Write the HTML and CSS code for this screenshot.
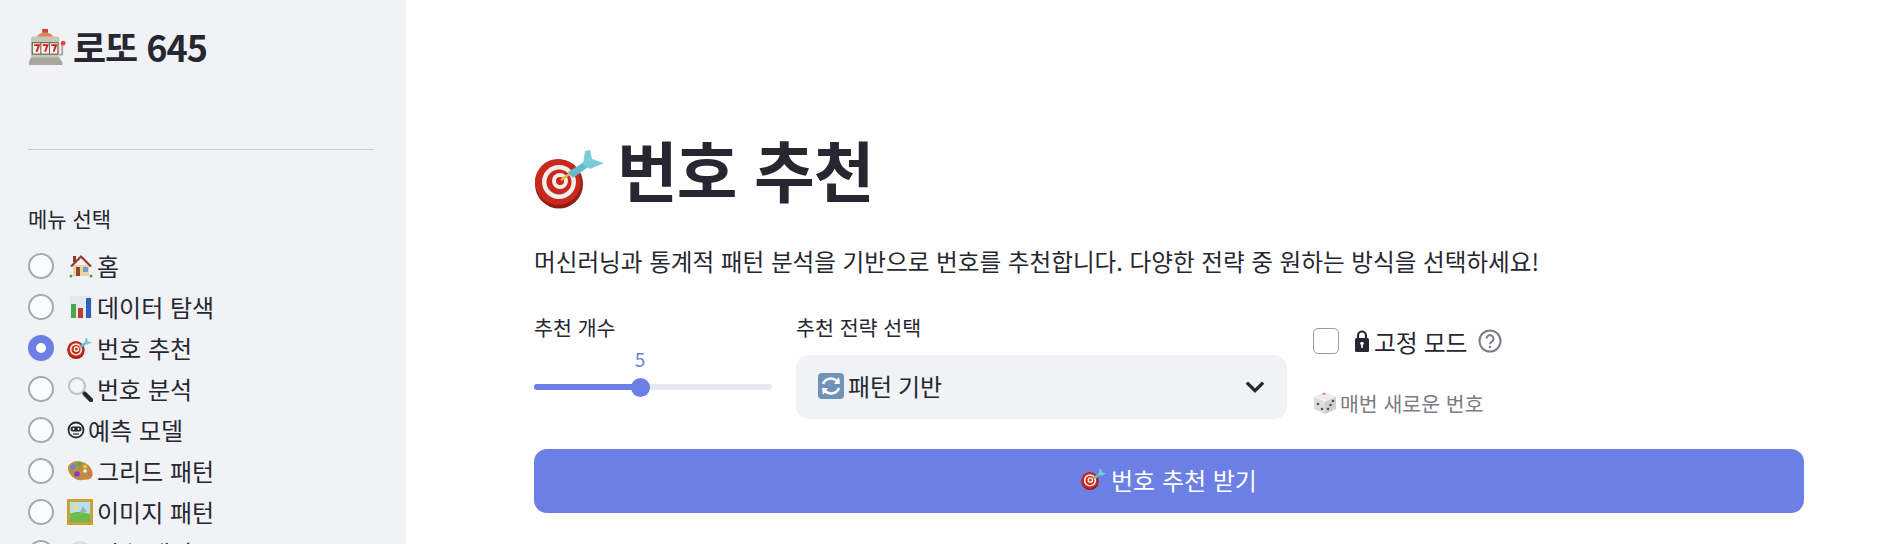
FILE: index.html
```html
<!DOCTYPE html>
<html lang="ko">
<head>
  <meta charset="UTF-8">
  <meta name="viewport" content="width=device-width, initial-scale=1.0">
  <title>번호 추천</title>
  <link rel="stylesheet" href="styles.css">
</head>
<body>
  <svg class="defs" width="0" height="0">
    <defs>
      <symbol id="i-dart" viewBox="0 0 72 72">
        <ellipse cx="25" cy="42" rx="24" ry="24.500" fill="#8f1d14"/>
        <circle cx="24" cy="40" r="23" fill="#c8281e"/>
        <circle cx="25" cy="40" r="17" fill="#f4eeea"/>
        <circle cx="25" cy="40" r="12.500" fill="#c8281e"/>
        <circle cx="26" cy="39" r="8" fill="#f4eeea"/>
        <circle cx="26" cy="39" r="4" fill="#c8281e"/>
        <path d="M27 38 37 31" stroke="#e3b83a" stroke-width="2.500"/>
        <path d="M34 30 50 20 54 25 39 36Z" fill="#63bccb"/>
        <path d="M49 22 51 9 56 8 58 17 70 21 56 27Z" fill="#7ccbd8"/>
      </symbol>
      <symbol id="i-slot" viewBox="0 0 40 40">
        <path d="M9 10C11 3 25 3 27 10Z" fill="#d98a55"/>
        <rect x="15" y="1" width="6" height="4" fill="#c8453a"/>
        <rect x="3" y="9" width="30" height="23" rx="3" fill="#c9c5b8"/>
        <rect x="4" y="15" width="28" height="13" fill="#55524a"/>
        <rect x="5" y="16" width="8" height="11" fill="#f2efe6"/>
        <rect x="14" y="16" width="8" height="11" fill="#f2efe6"/>
        <rect x="23" y="16" width="8" height="11" fill="#f2efe6"/>
        <path d="M6.500 18h5l-2.500 7M15.500 18h5l-2.500 7M24.500 18h5l-2.500 7" stroke="#d4201a" stroke-width="2" fill="none"/>
        <path d="M1 36 3 31H33L36 36V39H1Z" fill="#a9a69b"/>
        <path d="M33 28h3V17" stroke="#a9a69b" stroke-width="2" fill="none"/>
        <circle cx="37" cy="16" r="2.500" fill="#e0483e"/>
      </symbol>
      <symbol id="i-house" viewBox="0 0 24 24">
        <path d="M4 11H20V22H4Z" fill="#ecd3a6"/>
        <path d="M12 1 1 12 3 13 12 4 21 13 23 12Z" fill="#8e3a32"/>
        <rect x="4" y="2" width="3" height="6" fill="#8e3a32"/>
        <rect x="7" y="13" width="4" height="9" fill="#8a4a2d"/>
        <rect x="14" y="13" width="5" height="5" fill="#6ea3c7"/>
        <circle cx="2" cy="22" r="1.500" fill="#5a9a3a"/>
        <circle cx="22" cy="22" r="1.500" fill="#5a9a3a"/>
      </symbol>
      <symbol id="i-chart" viewBox="0 0 24 24">
        <rect x="1" y="1" width="22" height="22" fill="#e4e8ee"/>
        <rect x="2" y="9" width="5" height="14" fill="#4aa84a"/>
        <rect x="9" y="13" width="5" height="10" fill="#c0392b"/>
        <rect x="17" y="3" width="5" height="20" fill="#2c62b8"/>
      </symbol>
      <symbol id="i-glass" viewBox="0 0 26 26">
        <circle cx="10" cy="10" r="8" fill="#f2f6fa" stroke="#b7c0c8" stroke-width="2"/>
        <path d="M16 16 18 18" stroke="#777" stroke-width="3"/>
        <path d="M18 18 24 24" stroke="#26262c" stroke-width="4.500" stroke-linecap="round"/>
      </symbol>
      <symbol id="i-robot" viewBox="0 0 18 18">
        <circle cx="9" cy="9" r="7.500" fill="none" stroke="#26272f" stroke-width="1.800"/>
        <rect x="3.500" y="5.500" width="11" height="5" rx="2.500" fill="#26272f"/>
        <circle cx="6.500" cy="8" r="1" fill="#f0f2f6"/>
        <circle cx="11.500" cy="8" r="1" fill="#f0f2f6"/>
        <path d="M6 13h6" stroke="#26272f" stroke-width="1.200"/>
      </symbol>
      <symbol id="i-palette" viewBox="0 0 26 22">
        <path d="M1 7C3 1 12 0 18 3 24 6 27 12 25 17 23 21 19 19 15 20 10 22 0 15 1 7Z" fill="#c08c45"/>
        <circle cx="6" cy="7" r="2.500" fill="#4a8fd8"/>
        <circle cx="12" cy="4" r="2.300" fill="#4cae4c"/>
        <circle cx="18" cy="6.500" r="2" fill="#e8c53a"/>
        <circle cx="23" cy="14" r="2" fill="#e8663a"/>
        <circle cx="10" cy="14" r="2.800" fill="#7a42c8"/>
        <circle cx="18" cy="11" r="1.800" fill="#f0f2f6"/>
      </symbol>
      <symbol id="i-frame" viewBox="0 0 26 26">
        <rect width="26" height="26" fill="#c9a13b"/>
        <rect x="3" y="3" width="20" height="20" fill="#b5e0ee"/>
        <path d="M3 15C9 12 16 13 23 15V23H3Z" fill="#6dbb4a"/>
        <circle cx="8" cy="8" r="2.500" fill="#f4dd77"/>
        <path d="M13 13 16 7 20 13Z" fill="#9cb7b8"/>
      </symbol>
      <symbol id="i-orb" viewBox="0 0 26 26">
        <circle cx="13" cy="13" r="12" fill="#dddde0"/>
      </symbol>
      <symbol id="i-refresh" viewBox="0 0 26 26">
        <rect width="26" height="26" rx="4" fill="#6f93b8"/>
        <path d="M5 11A8.500 8.500 0 0 1 19 8" fill="none" stroke="#fff" stroke-width="2.600"/>
        <path d="M16 11 22 11 21 4Z" fill="#fff"/>
        <path d="M21 15A8.500 8.500 0 0 1 7 18" fill="none" stroke="#fff" stroke-width="2.600"/>
        <path d="M10 15 4 15 5 22Z" fill="#fff"/>
      </symbol>
      <symbol id="i-lock" viewBox="0 0 14 24">
        <path d="M3 10V6.500a4 4 0 0 1 8 0V10" fill="none" stroke="#26272f" stroke-width="2.200"/>
        <rect y="9" width="14" height="14" rx="1.500" fill="#26272f"/>
        <circle cx="7" cy="14.500" r="1.800" fill="#fff"/>
        <rect x="6.200" y="15" width="1.600" height="4" fill="#fff"/>
      </symbol>
      <symbol id="i-dice" viewBox="0 0 24 24">
        <path d="M12 1 23 6V18L12 23 1 18V6Z" fill="#dcdcdc"/>
        <path d="M12 1 23 6 12 11 1 6Z" fill="#f0efef"/>
        <path d="M12 11 23 6V18L12 23Z" fill="#cfcfcf"/>
        <ellipse cx="11" cy="3" rx="2" ry="1" fill="#e88"/>
        <circle cx="5" cy="13" r="1.300" fill="#555"/>
        <circle cx="9" cy="18" r="1.300" fill="#555"/>
        <circle cx="15" cy="18" r="1.300" fill="#555"/>
        <circle cx="17.500" cy="14" r="1.300" fill="#555"/>
        <circle cx="20" cy="10" r="1.300" fill="#555"/>
      </symbol>
    </defs>
  </svg>

  <div class="app">
    <aside class="sidebar">
      <div class="brand">
        <svg class="brand-icon"><use href="#i-slot"/></svg>
        <span>로또 645</span>
      </div>
      <hr class="side-rule">
      <p class="menu-title">메뉴 선택</p>
      <ul class="menu">
        <li class="menu-item"><span class="radio"></span><svg class="mi mi-wide"><use href="#i-house"/></svg>홈</li>
        <li class="menu-item"><span class="radio"></span><svg class="mi mi-wide"><use href="#i-chart"/></svg>데이터 탐색</li>
        <li class="menu-item"><span class="radio on"></span><svg class="mi"><use href="#i-dart"/></svg>번호 추천</li>
        <li class="menu-item"><span class="radio"></span><svg class="mi"><use href="#i-glass"/></svg>번호 분석</li>
        <li class="menu-item"><span class="radio"></span><svg class="mi mi-small"><use href="#i-robot"/></svg>예측 모델</li>
        <li class="menu-item"><span class="radio"></span><svg class="mi"><use href="#i-palette"/></svg>그리드 패턴</li>
        <li class="menu-item"><span class="radio"></span><svg class="mi"><use href="#i-frame"/></svg>이미지 패턴</li>
        <li class="menu-item"><span class="radio"></span><svg class="mi"><use href="#i-orb"/></svg>번호 패턴</li>
      </ul>
    </aside>

    <main class="content">
      <h1 class="page-title">
        <svg class="title-icon"><use href="#i-dart"/></svg>
        <span>번호 추천</span>
      </h1>
      <p class="intro">머신러닝과 통계적 패턴 분석을 기반으로 번호를 추천합니다. 다양한 전략 중 원하는 방식을 선택하세요!</p>

      <div class="controls">
        <div class="ctl-count">
          <label class="ctl-label">추천 개수</label>
          <div class="slider">
            <span class="slider-value">5</span>
            <div class="track"><div class="track-fill"></div><span class="thumb"></span></div>
          </div>
        </div>
        <div class="ctl-strategy">
          <label class="ctl-label">추천 전략 선택</label>
          <div class="select">
            <span class="select-text"><svg class="select-icon"><use href="#i-refresh"/></svg>패턴 기반</span>
            <svg class="chevron" viewBox="0 0 16 16"><path d="M1.500 4.500 8 11 14.500 4.500" fill="none" stroke="#26272f" stroke-width="2.600"/></svg>
          </div>
        </div>
        <div class="ctl-fixed">
          <div class="fixed-row">
            <span class="checkbox"></span>
            <svg class="lock"><use href="#i-lock"/></svg>
            <span class="fixed-text">고정 모드</span>
            <svg class="help" viewBox="0 0 24 24">
              <circle cx="12" cy="12" r="10.500" fill="none" stroke="#7b7c84" stroke-width="2"/>
              <path d="M8.500 9.500a3.500 3.500 0 1 1 5.500 3c-1.300.9-2 1.400-2 2.700" fill="none" stroke="#7b7c84" stroke-width="2"/>
              <circle cx="12" cy="18" r="1.300" fill="#7b7c84"/>
            </svg>
          </div>
          <div class="fixed-note"><svg class="dice"><use href="#i-dice"/></svg>매번 새로운 번호</div>
        </div>
      </div>

      <button class="submit"><svg class="submit-icon"><use href="#i-dart"/></svg>번호 추천 받기</button>
    </main>
  </div>
</body>
</html>
```

FILE: styles.css
```css
* {
  box-sizing: border-box;
}

html, body {
  margin: 0;
  height: 544px;
  overflow: hidden;
}

body {
  font-family: "Noto Sans CJK KR", "Noto Sans", sans-serif;
  color: #262730;
  background: #fff;
}

.defs {
  display: block;
  height: 0;
}

.app {
  display: flex;
  height: 544px;
}

.sidebar {
  width: 406px;
  flex: none;
  padding: 22px 32px 0 28px;
  background: #f0f2f6;
}

.brand {
  display: flex;
  align-items: center;
  gap: 7px;
  height: 48px;
  font-size: 36px;
  font-weight: 700;
  letter-spacing: -1px;
}

.brand-icon {
  width: 38px;
  height: 38px;
  flex: none;
  margin-top: 2px;
}

.side-rule {
  margin: 79px 0 0;
  border: 0;
  border-top: 1px solid #c9cace;
}

.menu-title {
  margin: 52px 0 0;
  font-size: 21px;
  line-height: 32px;
}

.menu {
  list-style: none;
  margin: 11px 0 0;
  padding: 0;
}

.menu-item {
  display: flex;
  align-items: center;
  height: 41px;
  font-size: 24px;
}

.radio {
  width: 26px;
  height: 26px;
  flex: none;
  margin-right: 13px;
  border: 2px solid #a8a9ae;
  border-radius: 50%;
  background: #fafbfe;
}

.radio.on {
  border: 8px solid #6c7fe4;
  background: #fff;
}

.mi {
  width: 26px;
  height: 26px;
  flex: none;
  margin-right: 4px;
}

.mi-wide {
  width: 24px;
  margin-left: 2px;
  margin-right: 4px;
}

.mi-small {
  width: 18px;
  height: 18px;
  margin-left: 0;
  margin-right: 3px;
}

.content {
  flex: 1;
  padding: 122px 98px 0 128px;
}

.page-title {
  display: flex;
  align-items: center;
  gap: 11px;
  height: 92px;
  margin: 0;
  font-size: 66px;
  font-weight: 700;
  letter-spacing: -1px;
}

.title-icon {
  width: 72px;
  height: 72px;
  flex: none;
  margin-top: 20px;
}

.intro {
  margin: 29px 0 0;
  font-size: 23.600px;
  line-height: 36px;
}

.controls {
  display: flex;
  margin-top: 33px;
}

.ctl-label {
  display: block;
  font-size: 20.600px;
  line-height: 30px;
}

.ctl-count {
  width: 238px;
  flex: none;
}

.slider {
  margin-top: 4px;
}

.slider-value {
  display: block;
  width: 212px;
  color: #6c7fe4;
  font-size: 19px;
  line-height: 26px;
  text-align: center;
}

.track {
  position: relative;
  height: 6px;
  margin-top: 12px;
  border-radius: 3px;
  background: #e6e8f0;
}

.track-fill {
  width: 106px;
  height: 6px;
  border-radius: 3px;
  background: #6c7fe4;
}

.thumb {
  position: absolute;
  left: 97px;
  top: -6.500px;
  width: 19px;
  height: 19px;
  border-radius: 50%;
  background: #6c7fe4;
}

.ctl-strategy {
  width: 491px;
  flex: none;
  margin-left: 24px;
}

.select {
  display: flex;
  align-items: center;
  justify-content: space-between;
  height: 64px;
  margin-top: 13px;
  padding: 0 22px;
  border-radius: 13px;
  background: #f0f2f6;
}

.select-text {
  display: flex;
  align-items: center;
  padding-bottom: 3px;
  font-size: 24px;
  word-spacing: -1px;
}

.select-icon {
  width: 26px;
  height: 26px;
  margin-right: 4px;
}

.chevron {
  width: 20px;
  height: 20px;
}

.ctl-fixed {
  margin-left: 26px;
}

.fixed-row {
  display: flex;
  align-items: center;
  height: 26px;
  margin-top: 16px;
}

.checkbox {
  width: 26px;
  height: 26px;
  border: 1px solid #9c9da3;
  border-radius: 5px;
  background: #fff;
}

.lock {
  width: 14px;
  height: 24px;
  margin-left: 16px;
  margin-right: 5px;
}

.fixed-text {
  font-size: 23.800px;
  letter-spacing: -0.2px;
}

.help {
  width: 24px;
  height: 24px;
  margin-left: 11px;
}

.fixed-note {
  display: flex;
  align-items: center;
  margin-top: 35px;
  color: #7b7c84;
  font-size: 20.500px;
  line-height: 28px;
}

.dice {
  width: 24px;
  height: 24px;
  margin-right: 3px;
}

.submit {
  display: flex;
  align-items: center;
  justify-content: center;
  width: 100%;
  height: 64px;
  margin-top: 30px;
  padding: 0 0 4px;
  border: 0;
  border-radius: 13px;
  background: #6c7fe4;
  color: #fff;
  font-family: inherit;
  font-size: 24px;
}

.submit-icon {
  width: 26px;
  height: 26px;
  margin-right: 4px;
}
```
